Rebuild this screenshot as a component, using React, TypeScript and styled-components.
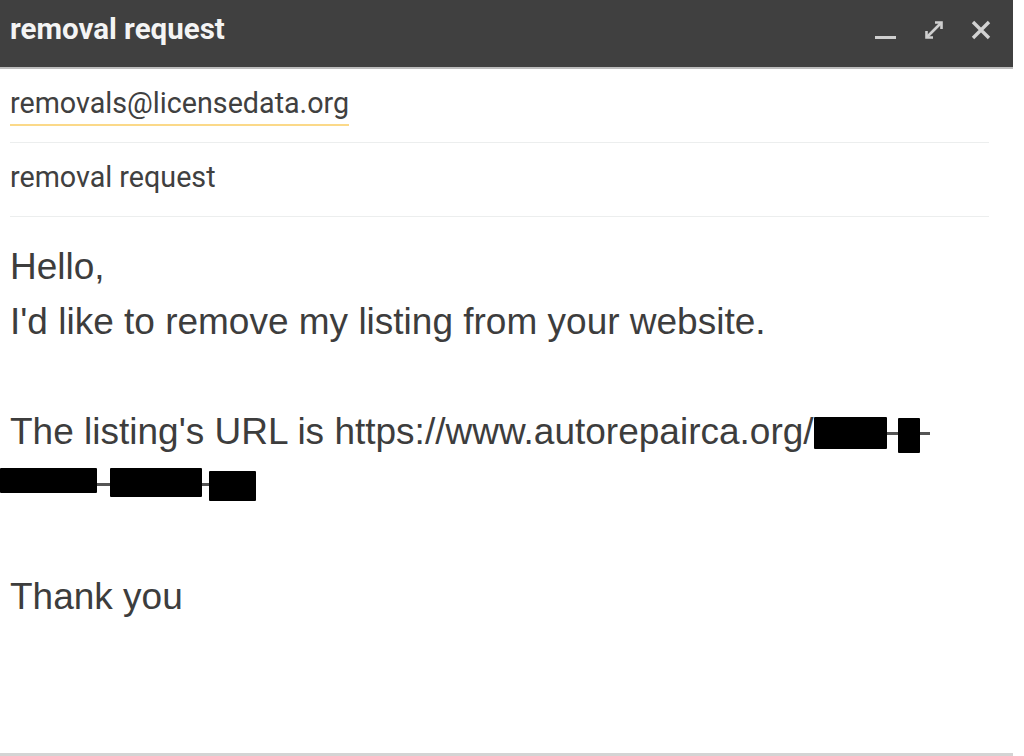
import React from 'react';
import styled, { createGlobalStyle } from 'styled-components';

const GlobalStyle = createGlobalStyle`
  html, body {
    margin: 0;
    padding: 0;
    background: #ffffff;
  }
`;

const Window = styled.div`
  width: 1013px;
  height: 756px;
  box-sizing: border-box;
  display: flex;
  flex-direction: column;
  background: #ffffff;
  border-bottom: 3px solid #d4d4d4;
`;

const TitleBar = styled.div`
  height: 69px;
  flex-shrink: 0;
  display: flex;
  align-items: center;
  justify-content: space-between;
  padding: 0 22px 0 10px;
  background: #404040;
  border-bottom: 2px solid #bdbdbd;
  box-sizing: border-box;
`;

const Title = styled.span`
  font-family: Roboto, "Liberation Sans", sans-serif;
  font-weight: 700;
  font-size: 29.5px;
  color: #f4f4f4;
  margin-top: -10px;
`;

const Controls = styled.div`
  display: flex;
  align-items: center;
  gap: 26px;
  margin-top: -8px;
`;

const Field = styled.div`
  height: 74px;
  margin: 0 24px 0 10px;
  display: flex;
  align-items: center;
  border-bottom: 1px solid #eceeee;
  box-sizing: border-box;
`;

const FieldText = styled.span<{ $underline?: boolean }>`
  font-family: Roboto, "Liberation Sans", sans-serif;
  font-size: 28.7px;
  color: #404040;
  padding-bottom: 4px;
  border-bottom: 2px solid ${({ $underline }) => ($underline ? '#fbd989' : 'transparent')};
`;

const Body = styled.div`
  padding: 22px 0 0 10px;
  font-family: "Liberation Sans", Arial, sans-serif;
  font-size: 37px;
  line-height: 55px;
  color: #3d3d3d;
`;

const Line = styled.div<{ $outdent?: boolean }>`
  min-height: 55px;
  display: flex;
  align-items: center;
  white-space: pre;
  margin-left: ${({ $outdent }) => ($outdent ? '-10px' : '0')};
`;

const Redact = styled.span<{ $w: number; $h: number; $dy?: number }>`
  display: inline-block;
  flex-shrink: 0;
  width: ${({ $w }) => $w}px;
  height: ${({ $h }) => $h}px;
  background: #000;
  border-radius: 1px;
  transform: translateY(${({ $dy }) => $dy ?? 0}px);
`;

const Dash = styled.span<{ $w: number; $dy?: number }>`
  display: inline-block;
  flex-shrink: 0;
  width: ${({ $w }) => $w}px;
  height: 3px;
  background: #555;
  transform: translateY(${({ $dy }) => $dy ?? 0}px);
`;

const IconMinimize = () => (
  <svg width="22" height="22" viewBox="0 0 22 22">
    <rect x="0" y="17" width="21" height="3" fill="#cfcfcf" />
  </svg>
);

const IconExpand = () => (
  <svg width="22" height="22" viewBox="0 0 22 22" fill="none" stroke="#cfcfcf" strokeWidth="2.6">
    <path d="M4 18 L18 4" />
    <path d="M12 3.5 H18.5 V10" />
    <path d="M3.5 12 V18.5 H10" />
  </svg>
);

const IconClose = () => (
  <svg width="20" height="20" viewBox="0 0 20 20" stroke="#d2d2d2" strokeWidth="3.4">
    <path d="M2 2 L18 18 M18 2 L2 18" />
  </svg>
);

export default function App() {
  return (
    <>
      <GlobalStyle />
      <Window>
        <TitleBar>
          <Title>removal request</Title>
          <Controls>
            <IconMinimize />
            <IconExpand />
            <IconClose />
          </Controls>
        </TitleBar>
        <Field>
          <FieldText $underline>removals@licensedata.org</FieldText>
        </Field>
        <Field>
          <FieldText>removal request</FieldText>
        </Field>
        <Body>
          <Line>Hello,</Line>
          <Line>I'd like to remove my listing from your website.</Line>
          <Line> </Line>
          <Line>
            The listing's URL is https://www.autorepairca.org/
            <Redact $w={73} $h={32} $dy={1} />
            <Dash $w={11} $dy={2} />
            <Redact $w={22} $h={35} $dy={4} />
            <Dash $w={10} $dy={2} />
          </Line>
          <Line $outdent>
            <Redact $w={97} $h={25} $dy={-6} />
            <Dash $w={13} $dy={-2} />
            <Redact $w={92} $h={29} $dy={-4} />
            <Dash $w={7} $dy={-2} />
            <Redact $w={47} $h={30} $dy={-1} />
          </Line>
          <Line> </Line>
          <Line>Thank you</Line>
        </Body>
      </Window>
    </>
  );
}
